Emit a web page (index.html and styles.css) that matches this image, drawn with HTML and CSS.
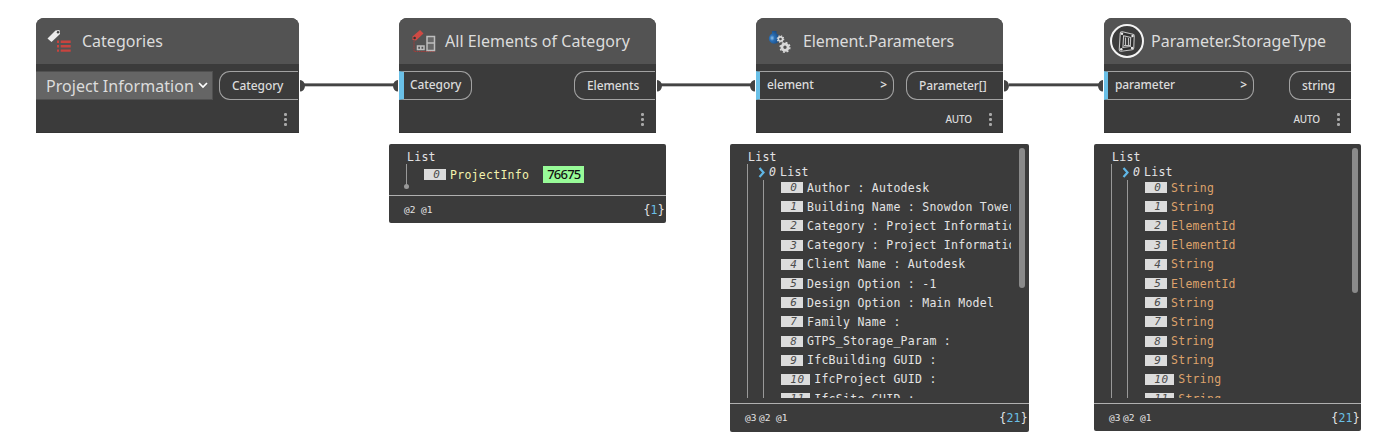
FILE: index.html
```
<!DOCTYPE html>
<html lang="en">
<head>
<meta charset="utf-8">
<title>Node graph</title>
<link rel="stylesheet" href="styles.css">
</head>
<body>
<main class="canvas">
  <svg class="wires" width="1386" height="442" viewBox="0 0 1386 442">
    <g fill="#444">
      <path d="M304 84h90v2h-90zM661 84h90v2h-90zM1009 84h90v2h-90z"/>
      <path fill="#8a8a8a" d="M304 83h90v1h-90zM661 83h90v1h-90zM1009 83h90v1h-90zM304 86h90v.5h-90zM661 86h90v.5h-90zM1009 86h90v.5h-90z"/>
      <path d="M300 80a5 5.800 0 0 1 0 11.600zM657 80a5 5.800 0 0 1 0 11.600zM1004 80a5 5.800 0 0 1 0 11.600z"/>
      <path d="M398 80a5 5.800 0 0 0 0 11.600zM755 80a5 5.800 0 0 0 0 11.600zM1103 80a5 5.800 0 0 0 0 11.600z"/>
    </g>
  </svg>

  <section class="node node-categories">
    <header class="node-head">
      <svg class="icon" width="26" height="26" viewBox="0 0 26 26">
        <path d="M.5 10.500 8.500 2.500 12.500 2l.5 4L4.500 14z" fill="#ececec"/><circle cx="11" cy="4.300" r="1.200" fill="#444"/>
        <path d="M10 12.600h2v2.400h-2zM13.700 12.600h10V15h-10zM10 17h2v2.400h-2zM13.700 17h10v2.400h-10zM10 21.400h2v2.400h-2zM13.700 21.400h10v2.400h-10z" fill="#c8443f"/>
      </svg>
      <h2 class="title">Categories</h2>
    </header>
    <div class="ports">
      <div class="select"><span>Project Information</span>
        <svg width="10" height="7" viewBox="0 0 10 7"><path d="M1 1l4 4 4-4" fill="none" stroke="#fff" stroke-width="1.700"/></svg>
      </div>
      <div class="port out">Category</div>
    </div>
    <footer class="node-foot"><i class="dots"></i></footer>
  </section>

  <section class="node node-elements">
    <header class="node-head">
      <svg class="icon" width="26" height="26" viewBox="0 0 26 26">
        <path d="M.5 8.500 8 2l3.500 3.500L4 12.500.5 12z" fill="#cf4a44"/><circle cx="2.600" cy="10" r="1.300" fill="#333"/>
        <path d="M2 13v10.500H23" fill="none" stroke="#a33c39" stroke-width="1" stroke-dasharray="1.500 .7"/>
        <path d="M15 8.500h7.500v14H15z" fill="#686868"/>
        <path d="M15 8.500h7.500v14H15zM15 15h7.500M5.500 18h6.500v3.500H5.500zM8.750 18v3.500" fill="none" stroke="#bdbdbd" stroke-width="1.500"/>
      </svg>
      <h2 class="title">All Elements of Category</h2>
    </header>
    <div class="ports">
      <div class="port in">Category</div>
      <div class="port out">Elements</div>
    </div>
    <footer class="node-foot"><i class="dots"></i></footer>
  </section>

  <section class="node node-parameters">
    <header class="node-head">
      <svg class="icon" width="26" height="26" viewBox="0 0 26 26">
        <defs><radialGradient id="flask" cx=".3" cy=".55" r=".65"><stop offset="0" stop-color="#8fc4ee"/><stop offset=".35" stop-color="#2b6fb5"/><stop offset="1" stop-color="#174a82"/></radialGradient></defs>
        <path d="M4 3h4.500v2.500a5.400 5.400 0 1 1-4.500 0z" fill="url(#flask)"/>
        <g fill="none" stroke="#d8d8d8"><circle cx="12.500" cy="11" r="2.100" stroke-width="1.600"/><circle cx="12.500" cy="11" r="3.200" stroke-width="1.200" stroke-dasharray="1.256"/>
        <circle cx="17" cy="19.300" r="3.100" stroke-width="2.800"/><circle cx="17" cy="19.300" r="4.900" stroke-width="1.400" stroke-dasharray="1.924"/></g>
      </svg>
      <h2 class="title">Element.Parameters</h2>
    </header>
    <div class="ports">
      <div class="port in">element<b>&gt;</b></div>
      <div class="port out">Parameter[]</div>
    </div>
    <footer class="node-foot"><span>AUTO</span><i class="dots"></i></footer>
  </section>

  <section class="node node-storage">
    <header class="node-head">
      <svg class="icon ring" width="34" height="34" viewBox="0 0 34 34">
        <circle cx="17" cy="17" r="16" fill="#3c3c3c" stroke="#f4f4f4" stroke-width="2"/>
        <path d="M12 9.500l10.500 2.500-.5 12L11 25.500z" fill="none" stroke="#c4c4c4" stroke-width="4.600" stroke-linejoin="round"/>
        <path d="M12 9.500l10.500 2.500-.5 12L11 25.500z" fill="none" stroke="#2e2e2e" stroke-width="2.400" stroke-linejoin="round"/>
        <path d="M15.500 13.500v7.500M18.500 14v7M14 21.500h6" fill="none" stroke="#d0d0d0" stroke-width=".9"/>
        <g fill="#e8e8e8"><circle cx="12" cy="9.700" r="1.200"/><circle cx="22.500" cy="12" r="1.200"/><circle cx="22" cy="24" r="1.200"/><circle cx="11.300" cy="25.300" r="1.200"/></g>
      </svg>
      <h2 class="title">Parameter.StorageType</h2>
    </header>
    <div class="ports">
      <div class="port in">parameter<b>&gt;</b></div>
      <div class="port out">string</div>
    </div>
    <footer class="node-foot"><span>AUTO</span><i class="dots"></i></footer>
  </section>

  <section class="preview preview-elements">
    <div class="tree">
      <div class="root">List</div>
      <div class="branch leaf">
        <div class="row"><em class="chip">0</em><span class="info">ProjectInfo</span><span class="id">76675</span></div>
      </div>
    </div>
    <footer class="preview-foot"><span class="levels"><span>@<small>2</small></span><span>@<small>1</small></span></span><span class="count">{<b>1</b>}</span></footer>
  </section>

  <section class="preview preview-parameters">
    <div class="tree">
      <div class="root">List</div>
      <div class="branch">
        <div class="sub"><svg width="8" height="11" viewBox="0 0 8 11"><path d="M1.500 1l4 4.500L1.500 10" fill="none" stroke="#5fb6e6" stroke-width="2.200"/></svg><em>0</em><span>List</span></div>
        <div class="items">
          <div class="row"><em class="chip">0</em><span>Author : Autodesk</span></div>
          <div class="row"><em class="chip">1</em><span>Building Name : Snowdon Towers</span></div>
          <div class="row"><em class="chip">2</em><span>Category : Project Information</span></div>
          <div class="row"><em class="chip">3</em><span>Category : Project Information</span></div>
          <div class="row"><em class="chip">4</em><span>Client Name : Autodesk</span></div>
          <div class="row"><em class="chip">5</em><span>Design Option : -1</span></div>
          <div class="row"><em class="chip">6</em><span>Design Option : Main Model</span></div>
          <div class="row"><em class="chip">7</em><span>Family Name :</span></div>
          <div class="row"><em class="chip">8</em><span>GTPS_Storage_Param :</span></div>
          <div class="row"><em class="chip">9</em><span>IfcBuilding GUID :</span></div>
          <div class="row"><em class="chip">10</em><span>IfcProject GUID :</span></div>
          <div class="row"><em class="chip">11</em><span>IfcSite GUID :</span></div>
        </div>
      </div>
    </div>
    <i class="scroll"></i>
    <footer class="preview-foot"><span class="levels"><span class="tight">@<small>3</small></span><span>@<small>2</small></span><span>@<small>1</small></span></span><span class="count">{<b>21</b>}</span></footer>
  </section>

  <section class="preview preview-storage">
    <div class="tree">
      <div class="root">List</div>
      <div class="branch">
        <div class="sub"><svg width="8" height="11" viewBox="0 0 8 11"><path d="M1.500 1l4 4.500L1.500 10" fill="none" stroke="#5fb6e6" stroke-width="2.200"/></svg><em>0</em><span>List</span></div>
        <div class="items types">
          <div class="row"><em class="chip">0</em><span>String</span></div>
          <div class="row"><em class="chip">1</em><span>String</span></div>
          <div class="row"><em class="chip">2</em><span>ElementId</span></div>
          <div class="row"><em class="chip">3</em><span>ElementId</span></div>
          <div class="row"><em class="chip">4</em><span>String</span></div>
          <div class="row"><em class="chip">5</em><span>ElementId</span></div>
          <div class="row"><em class="chip">6</em><span>String</span></div>
          <div class="row"><em class="chip">7</em><span>String</span></div>
          <div class="row"><em class="chip">8</em><span>String</span></div>
          <div class="row"><em class="chip">9</em><span>String</span></div>
          <div class="row"><em class="chip">10</em><span>String</span></div>
          <div class="row"><em class="chip">11</em><span>String</span></div>
        </div>
      </div>
    </div>
    <i class="scroll"></i>
    <footer class="preview-foot"><span class="levels"><span class="tight">@<small>3</small></span><span>@<small>2</small></span><span>@<small>1</small></span></span><span class="count">{<b>21</b>}</span></footer>
  </section>
</main>
</body>
</html>
```
FILE: styles.css
```
* { box-sizing: border-box; }
body { margin: 0; background: #fff; font-family: "Noto Sans", sans-serif; }
.canvas { position: relative; width: 1386px; height: 442px; overflow: hidden; }
.wires { position: absolute; left: 0; top: 0; }

/* Nodes on the graph canvas */
.node { position: absolute; top: 18px; height: 115px; background: #3b3b3b; border-radius: 8px 8px 0 0; overflow: hidden; color: #dcdcdc; border-bottom: 1px solid #343434; }
.node-categories { left: 36px; width: 263px; }
.node-elements { left: 399px; width: 257px; }
.node-parameters { left: 756px; width: 247px; }
.node-storage { left: 1104px; width: 247px; }
.node-head { display: flex; align-items: center; height: 46px; background: #535353; padding-left: 11px; }
.icon { flex: none; margin-right: 9px; }
.node-elements .icon { margin-left: 2px; margin-right: 7px; }
.node-parameters .icon { margin-left: 1px; }
.node-storage .node-head { padding-left: 6px; }
.icon.ring { margin-right: 7px; }
.title { margin: 0; font-size: 16px; font-weight: 400; line-height: 24px; white-space: nowrap; }
.node-elements .title { letter-spacing: 0.05px; }
.node-parameters .title { letter-spacing: -0.1px; }
.ports { display: flex; justify-content: space-between; margin-top: 7px; height: 29px; }
.select { display: flex; align-items: center; justify-content: space-between; width: 177px; padding: 0 4px 0 10px; background: #656565; border: solid #505050; border-width: 1px 1px 1px 0; font-size: 16px; letter-spacing: 0.05px; white-space: nowrap; }
.port { display: flex; align-items: center; justify-content: space-between; border: 1px solid #a2a2a2; font-size: 12px; font-weight: 500; letter-spacing: -0.1px; line-height: 16px; white-space: nowrap; }
.port.in { border-left: 4px solid #6ac0e7; border-radius: 0 11px 11px 0; padding: 0 6px 2px 7px; }
.port.out { border-right: 0; border-radius: 11px 0 0 11px; padding-left: 12px; }
.port b { font-weight: 600; }
.node-categories .out { width: 79px; margin-right: 1px; }
.node-elements .in { width: 73px; border-left-width: 5px; padding-left: 6px; }
.node-elements .out { width: 81px; margin-right: 1px; }
.node-parameters .in { width: 138px; }
.node-parameters .out { width: 97px; }
.node-storage .in { width: 150px; }
.node-storage .out { width: 62px; }
.node-foot { display: flex; justify-content: flex-end; align-items: center; height: 33px; padding: 5px 12px 0 0; font-size: 10px; font-weight: 500; letter-spacing: -0.15px; gap: 17px; }
.node-parameters .node-foot, .node-storage .node-foot { padding-right: 11px; }
.dots { width: 3px; height: 13px; background: radial-gradient(circle at 1.500px 1.500px, #a8a8a8 1.200px, transparent 1.900px) 0 0 / 3px 5px; }

/* Output previews */
.preview { position: absolute; top: 144px; display: flex; flex-direction: column; background: #3b3b3b; border-radius: 2px; overflow: hidden; color: #e4e4e4; font: 11.500px/16px "DejaVu Sans Mono", monospace; letter-spacing: 0.277px; }
.preview-elements { left: 389px; width: 277px; height: 79px; }
.preview-parameters { left: 730px; width: 299px; height: 288px; }
.preview-storage { left: 1094px; width: 267px; height: 287px; }
.tree { height: 254px; margin: 0 18px 0 17px; overflow: hidden; white-space: nowrap; }
.preview-elements .tree { height: 51px; overflow: visible; }
.root { height: 20px; padding: 5px 0 0 1px; }
.branch { height: 234px; border-left: 1px solid #999; }
.leaf { position: relative; height: 22px; padding: 0 0 0 17px; }
.leaf::after { content: ""; position: absolute; left: -3px; top: 20px; width: 5px; height: 5px; border-radius: 50%; background: #999; }
.sub { display: flex; align-items: center; height: 16px; padding-left: 10px; }
.sub em { width: 7px; margin: 0 4px 0 3px; }
.items { height: 218px; margin-left: 15px; padding-left: 17px; border-left: 1px solid #999; overflow: hidden; }
.items .row { position: relative; top: -2px; }
.row { display: flex; align-items: center; height: 19.200px; }
.leaf .row { height: 21px; }
.chip { height: 11px; line-height: 11px; padding: 0 5.500px 0 9.300px; margin-right: 4px; background: #dcdcdc; color: #4c4c4c; font-size: 11px; letter-spacing: 0.578px; }
.types { color: #dda26b; }
.info { color: #f3f3ae; }
.id { margin-left: 14px; height: 17px; padding: 0 4px; background: #98fb98; color: #111; font: 500 13px/16px "Noto Sans", sans-serif; letter-spacing: -0.800px; width: 41px; }
.preview-foot { display: flex; align-items: center; justify-content: space-between; height: 28px; margin-top: 5px; padding: 0 1px 0 15px; border-top: 1px solid #b0b0b0; }
.preview-elements .preview-foot { margin-top: 0; }
.levels { display: flex; gap: 4px; font-size: 9.500px; letter-spacing: 0; padding-top: 1px; }
.levels > span { width: 13px; white-space: nowrap; }
.levels .tight { margin-right: -3px; }
.levels small { font-size: 9.500px; }
.count b { color: #6ac0e7; font-weight: 400; }
.scroll { position: absolute; top: 4px; right: 4px; width: 6px; height: 140px; border-radius: 3px; background: #8a8a8a; }
.preview-storage .scroll { right: 3px; height: 145px; }
```
